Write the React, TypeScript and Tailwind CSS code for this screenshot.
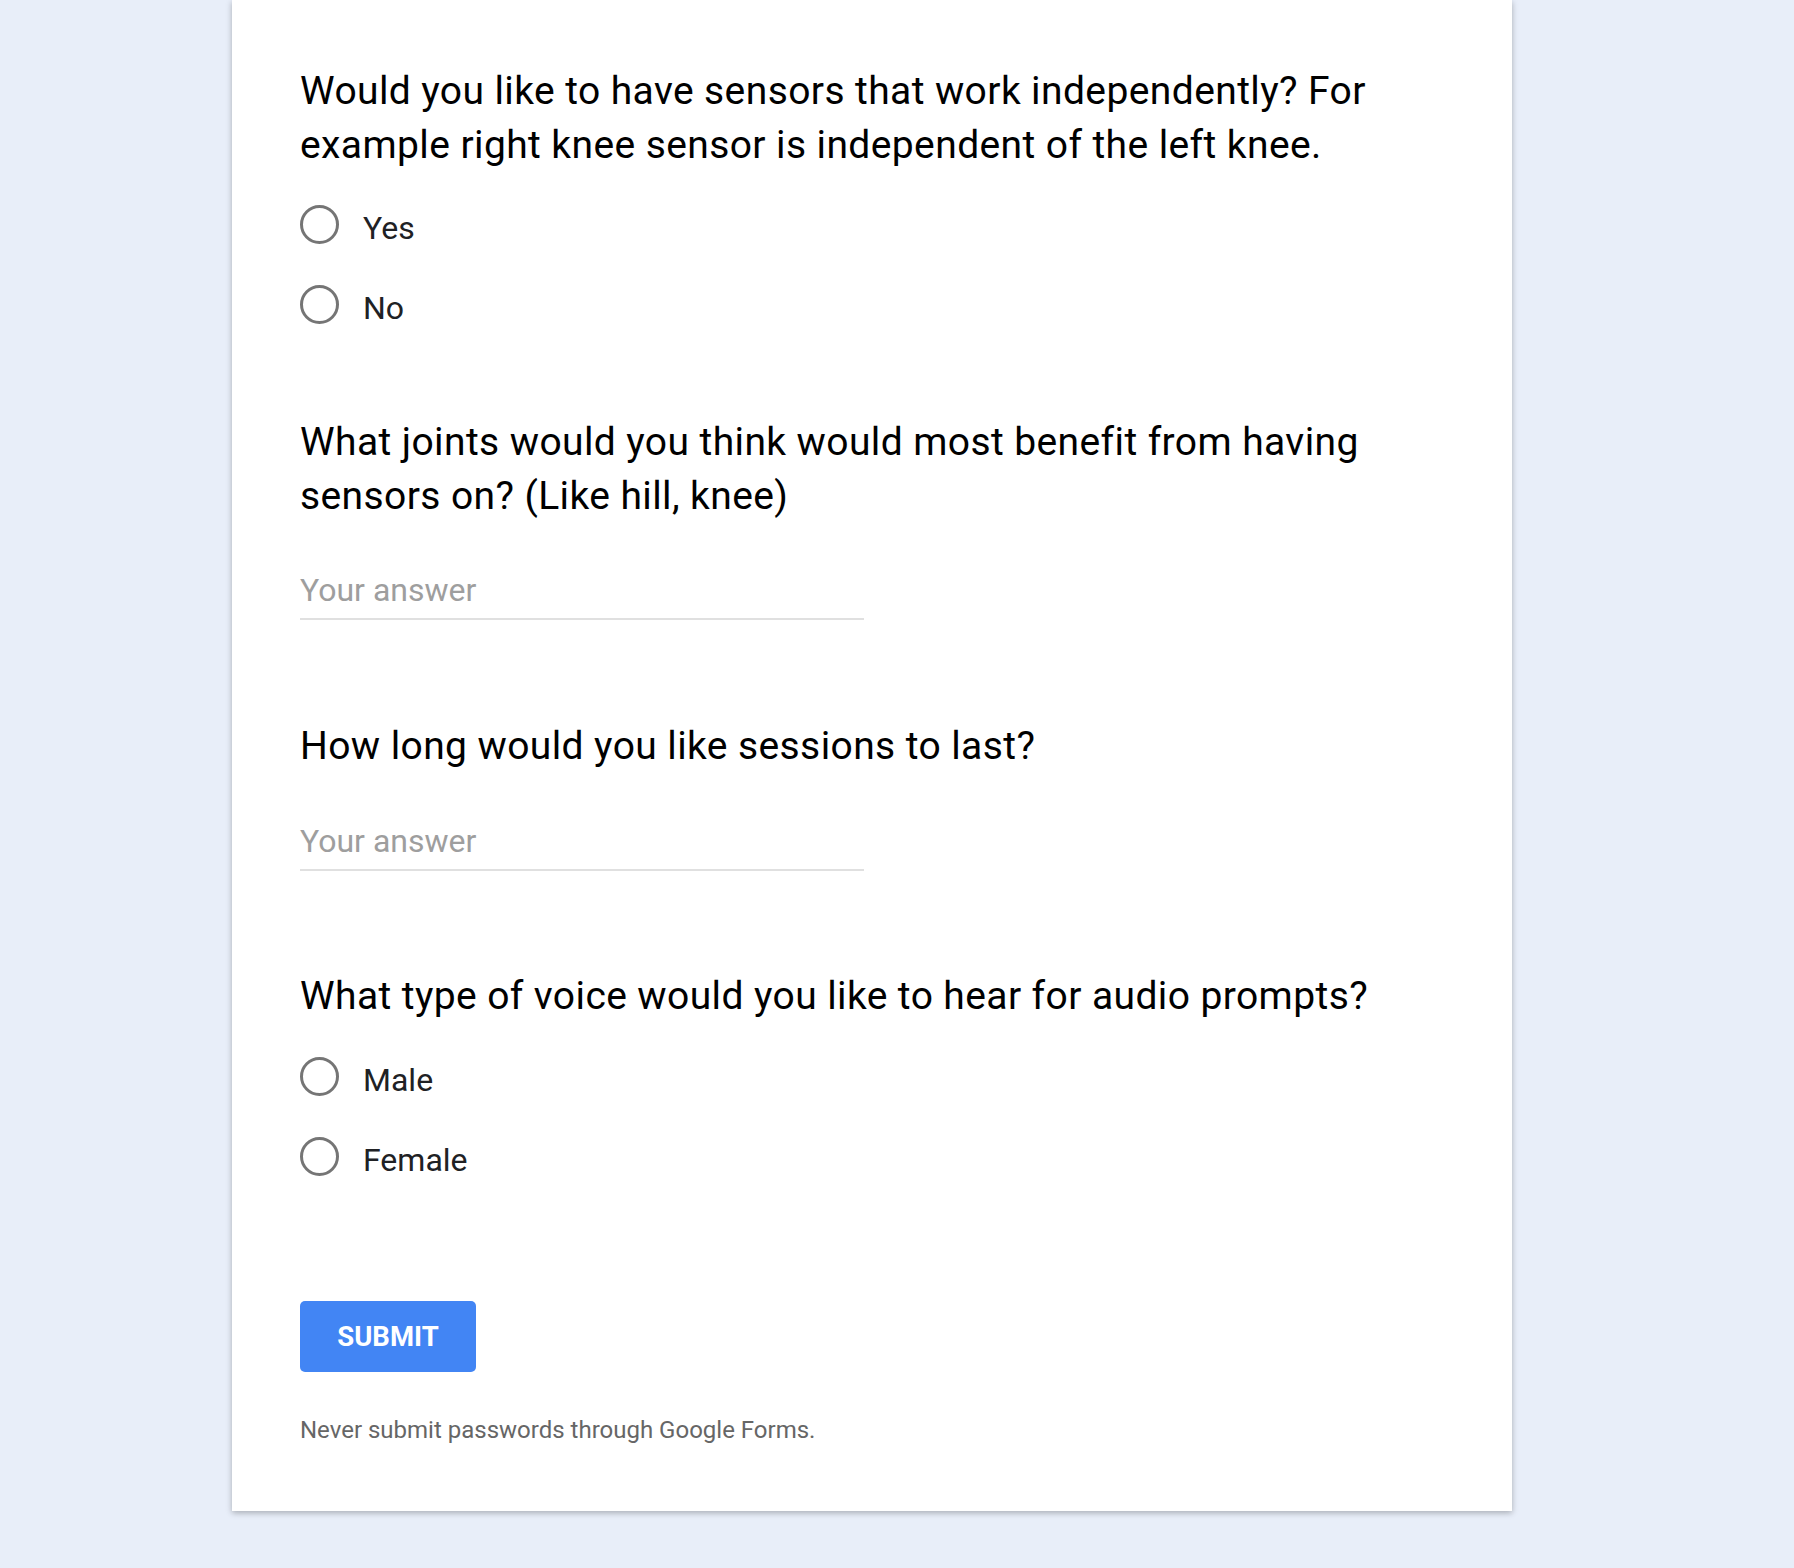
const Radio = ({ label }: { label: string }) => (
  <div className="flex h-[80px] items-center">
    <span className="h-[39px] w-[39px] shrink-0 rounded-full border-[3px] border-[#757575]" />
    <span className="ml-[24px] mt-[8px] text-[32px] leading-[40px] text-[#202124]">{label}</span>
  </div>
);

const Answer = ({ top }: { top: string }) => (
  <div className={`${top} w-[564px] border-b-2 border-[#e0e0e0] pb-[8px]`}>
    <div className="h-[40px] text-[32px] leading-[40px] text-[#9e9e9e]">Your answer</div>
  </div>
);

const Title = ({ children }: { children: React.ReactNode }) => (
  <div className="text-[39px] leading-[54px] tracking-[0.4px] text-black">{children}</div>
);

export default function App() {
  return (
    <div
      className="min-h-screen bg-[#e8eef9] pb-[58px]"
      style={{ fontFamily: "Roboto, 'Noto Sans', sans-serif" }}
    >
      <div className="ml-[232px] w-[1280px] bg-white px-[68px] pt-[64px] pb-[65px] shadow-[0_2px_6px_rgba(0,0,0,0.28)]">
        {/* Q1 */}
        <Title>
          Would you like to have sensors that work independently? For example right knee sensor is
          independent of the left knee.
        </Title>
        <div className="mt-[12px]">
          <Radio label="Yes" />
          <Radio label="No" />
        </div>

        {/* Q2 */}
        <div className="mt-[71px]">
          <Title>What joints would you think would most benefit from having sensors on? (Like hill, knee)</Title>
          <Answer top="mt-[47px]" />
        </div>

        {/* Q3 */}
        <div className="mt-[99px]">
          <Title>How long would you like sessions to last?</Title>
          <Answer top="mt-[48px]" />
        </div>

        {/* Q4 */}
        <div className="mt-[98px]">
          <Title>What type of voice would you like to hear for audio prompts?</Title>
          <div className="mt-[13px]">
            <Radio label="Male" />
            <Radio label="Female" />
          </div>
        </div>

        <button className="mt-[105px] flex h-[71px] w-[176px] items-center justify-center rounded-[5px] bg-[#4285f4] text-[27.5px] font-bold text-white">
          SUBMIT
        </button>

        <div className="mt-[42px] text-[24px] leading-[32px] text-[#666666]">
          Never submit passwords through Google Forms.
        </div>
      </div>
    </div>
  );
}
